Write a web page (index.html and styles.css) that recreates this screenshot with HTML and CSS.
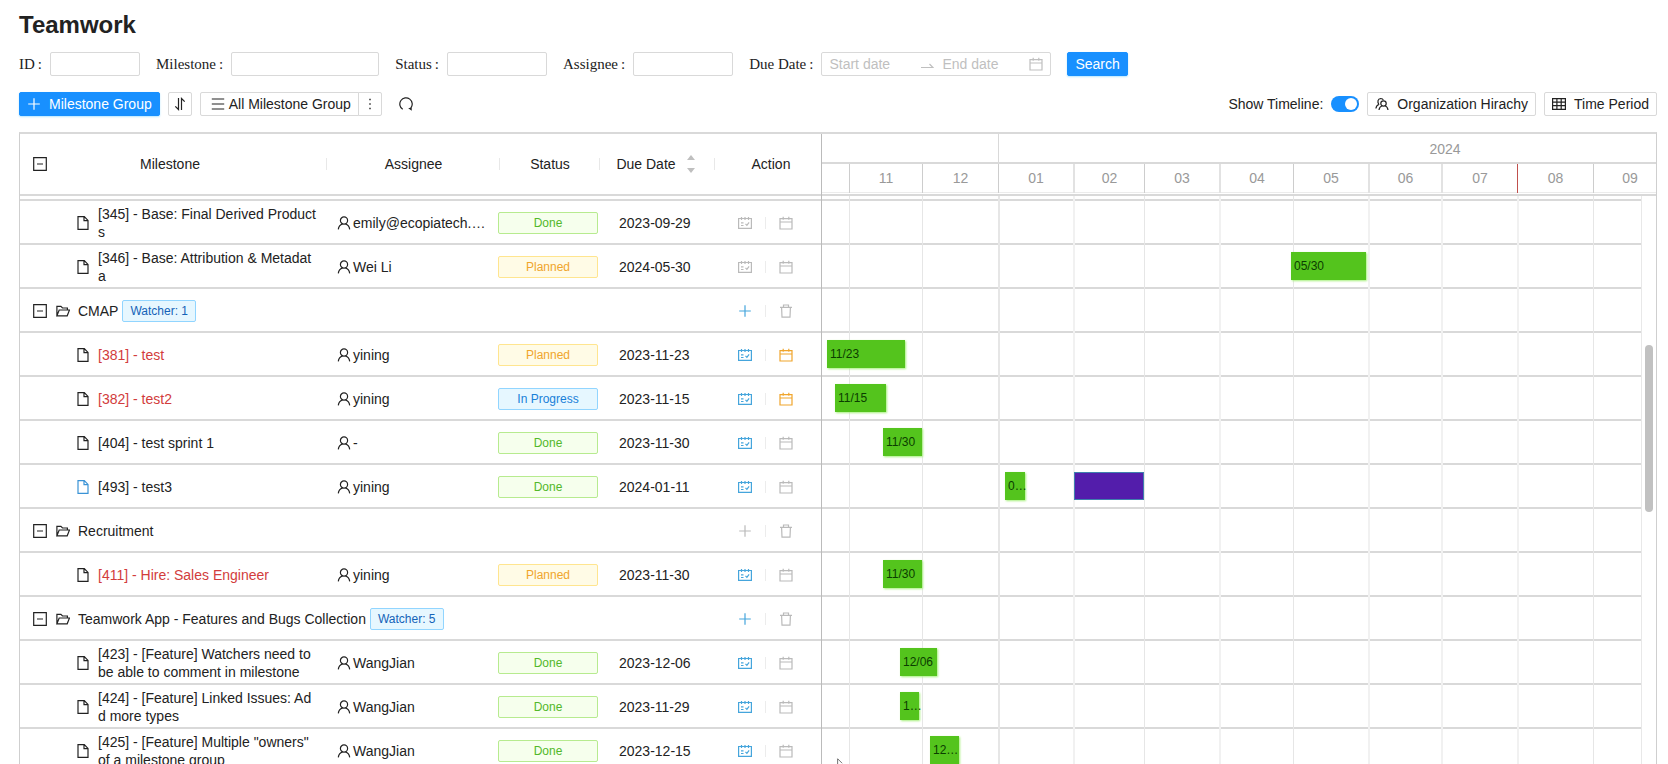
FILE: index.html
```html
<!DOCTYPE html>
<html lang="en">
<head>
<meta charset="utf-8">
<title>Teamwork</title>
<link rel="stylesheet" href="styles.css">
</head>
<body>
<svg class="sprite" aria-hidden="true">
  <symbol id="i-minus" viewBox="0 0 14 14"><path d="M.7.7h12.6v12.6H.7zM4 7h6"/></symbol>
  <symbol id="i-file" viewBox="0 0 14 14"><path d="M2 .7h6.3L12 4.4v8.900H2zM8 .9v3.800h3.800"/></symbol>
  <symbol id="i-folder" viewBox="0 0 14 14"><path d="M.9 11.800V2.400h4l1.600 1.600h4.900v2M.9 11.800 3.200 6h10.300l-2.300 5.800z"/></symbol>
  <symbol id="i-user" viewBox="0 0 14 14"><circle cx="7" cy="4.500" r="3.600"/><path d="M1.300 13.400C1.600 10.600 3.600 8.600 5.600 7.900M12.700 13.400C12.400 10.600 10.400 8.600 8.400 7.900"/></symbol>
  <symbol id="i-team" viewBox="0 0 14 14"><circle cx="8.500" cy="6.500" r="2.700"/><path d="M4 13c.3-2.200 1.500-3.600 3.200-4.200M13 13c-.3-2.200-1.300-3.600-3-4.200M3.800 6.900C2.300 5.500 2.600 1.600 5.700 1.500 7 1.500 8 2.200 8.300 3.200M.9 11.500C1.100 9.400 2.200 8 4.200 7.200"/></symbol>
  <symbol id="i-plan" viewBox="0 0 14 14"><path d="M.6 2.500h12.800v9.900H.6zM3.500 1v3M7 1v3M10.500 1v3M3 6.800h2.500M3 9.500h2.500M7.500 7.800l1.400 1.500 2.200-3"/></symbol>
  <symbol id="i-cal" viewBox="0 0 14 14"><path d="M1 2.600h12v10.400H1zM1 6h12M4.200.8v3M9.800.8v3"/></symbol>
  <symbol id="i-plus" viewBox="0 0 14 14"><path d="M7 1.200v11.600M1.200 7h11.600"/></symbol>
  <symbol id="i-trash" viewBox="0 0 14 14"><path d="M1 3.300h12M4.500 3V1h5v2M2.600 3.500l.4 9.700h8l.4-9.700"/></symbol>
  <symbol id="i-sort" viewBox="0 0 14 14"><path d="M5.500 1v11.500L2.300 9.300M8.500 13V1.500l3.200 3.200"/></symbol>
  <symbol id="i-menu" viewBox="0 0 14 14"><path d="M.8 2h12.400M.8 7h12.400M.8 12h12.400"/></symbol>
  <symbol id="i-more" viewBox="0 0 14 14"><path d="M6.300 1.800h1.400v1.400H6.300zM6.300 6.300h1.400v1.400H6.300zM6.300 10.800h1.400v1.400H6.300z" fill="currentColor" stroke="none"/></symbol>
  <symbol id="i-reload" viewBox="0 0 14 14"><path d="M3.700 12.300A6.200 6.200 0 1 1 11.800 11"/><path d="M9.200 11.200l3.400-.8.2 3.300z" fill="currentColor" stroke="none"/></symbol>
  <symbol id="i-table" viewBox="0 0 14 14"><path d="M.6 1.700h12.800v10.600H.6zM.6 5.200h12.800M.6 8.700h12.800M4.900 1.700v10.600M9.200 1.700v10.600"/></symbol>
  <symbol id="i-swap" viewBox="0 0 14 14"><path d="M1 10.500h12L9.500 7"/></symbol>
</svg>

<main class="page">
  <h1 class="title">Teamwork</h1>

  <form class="filters">
    <div class="field"><label for="f-id">ID<span class="colon">:</span></label><input id="f-id" class="input input-id" type="text"></div>
    <div class="field"><label for="f-ms">Milestone<span class="colon">:</span></label><input id="f-ms" class="input input-ms" type="text"></div>
    <div class="field"><label for="f-st">Status<span class="colon">:</span></label><input id="f-st" class="input" type="text"></div>
    <div class="field"><label for="f-as">Assignee<span class="colon">:</span></label><input id="f-as" class="input" type="text"></div>
    <div class="field"><label for="f-due">Due Date<span class="colon">:</span></label>
      <div class="range">
        <input id="f-due" type="text" placeholder="Start date">
        <svg class="icon"><use href="#i-swap"/></svg>
        <input type="text" placeholder="End date" aria-label="End date">
        <svg class="icon"><use href="#i-cal"/></svg>
      </div>
    </div>
    <button class="btn primary" type="button">Search</button>
  </form>

  <div class="toolbar">
    <button class="btn primary with-icon" type="button"><svg class="icon"><use href="#i-plus"/></svg>Milestone Group</button>
    <button class="btn square" type="button" aria-label="Sort"><svg class="icon"><use href="#i-sort"/></svg></button>
    <div class="combo">
      <button class="btn all" type="button"><svg class="icon"><use href="#i-menu"/></svg>All Milestone Group</button>
      <button class="btn more" type="button" aria-label="More"><svg class="icon"><use href="#i-more"/></svg></button>
    </div>
    <button class="plain reload" type="button" aria-label="Reload"><svg class="icon"><use href="#i-reload"/></svg></button>
    <div class="toolbar-right">
      <label class="show" for="show-tl">Show Timeline:</label>
      <input id="show-tl" class="switch" type="checkbox" role="switch" checked>
      <button class="btn with-icon" type="button"><svg class="icon"><use href="#i-team"/></svg>Organization Hirachy</button>
      <button class="btn with-icon" type="button"><svg class="icon"><use href="#i-table"/></svg>Time Period</button>
    </div>
  </div>

  <section class="gantt">
    <table class="list">
      <colgroup><col class="c-ms"><col class="c-as"><col class="c-st"><col class="c-due"><col class="c-act"></colgroup>
      <thead>
        <tr>
          <th><div class="head-ms"><button class="plain" type="button" aria-label="Collapse all"><svg class="icon"><use href="#i-minus"/></svg></button><span>Milestone</span></div></th>
          <th>Assignee</th><th>Status</th>
          <th><div class="head-due">Due Date<span class="sorter"><i class="up"></i><i class="down"></i></span></div></th>
          <th class="head-act">Action</th>
        </tr>
      </thead>
      <tbody>
        <tr class="peek"><td colspan="5"></td></tr>
        <tr><td><div class="item"><svg class="icon"><use href="#i-file"/></svg><span class="name">[345] - Base: Final Derived Products</span></div></td><td><div class="person"><svg class="icon"><use href="#i-user"/></svg>emily@ecopiatech.…</div></td><td><span class="tag done">Done</span></td><td class="date">2023-09-29</td><td><div class="acts"><button class="plain" type="button" aria-label="Plan"><svg class="icon"><use href="#i-plan"/></svg></button><button class="plain" type="button" aria-label="Schedule"><svg class="icon"><use href="#i-cal"/></svg></button></div></td></tr>
        <tr><td><div class="item"><svg class="icon"><use href="#i-file"/></svg><span class="name">[346] - Base: Attribution &amp; Metadata</span></div></td><td><div class="person"><svg class="icon"><use href="#i-user"/></svg>Wei Li</div></td><td><span class="tag planned">Planned</span></td><td class="date">2024-05-30</td><td><div class="acts"><button class="plain" type="button" aria-label="Plan"><svg class="icon"><use href="#i-plan"/></svg></button><button class="plain" type="button" aria-label="Schedule"><svg class="icon"><use href="#i-cal"/></svg></button></div></td></tr>
        <tr><td colspan="4"><div class="group"><button class="plain" type="button" aria-label="Collapse"><svg class="icon"><use href="#i-minus"/></svg></button><svg class="icon"><use href="#i-folder"/></svg><span>CMAP</span><span class="watch">Watcher: 1</span></div></td><td><div class="acts"><button class="plain blue" type="button" aria-label="Add"><svg class="icon"><use href="#i-plus"/></svg></button><button class="plain" type="button" aria-label="Delete"><svg class="icon"><use href="#i-trash"/></svg></button></div></td></tr>
        <tr><td><div class="item late"><svg class="icon"><use href="#i-file"/></svg><span class="name">[381] - test</span></div></td><td><div class="person"><svg class="icon"><use href="#i-user"/></svg>yining</div></td><td><span class="tag planned">Planned</span></td><td class="date">2023-11-23</td><td><div class="acts"><button class="plain blue" type="button" aria-label="Plan"><svg class="icon"><use href="#i-plan"/></svg></button><button class="plain orange" type="button" aria-label="Schedule"><svg class="icon"><use href="#i-cal"/></svg></button></div></td></tr>
        <tr><td><div class="item late"><svg class="icon"><use href="#i-file"/></svg><span class="name">[382] - test2</span></div></td><td><div class="person"><svg class="icon"><use href="#i-user"/></svg>yining</div></td><td><span class="tag progress">In Progress</span></td><td class="date">2023-11-15</td><td><div class="acts"><button class="plain blue" type="button" aria-label="Plan"><svg class="icon"><use href="#i-plan"/></svg></button><button class="plain orange" type="button" aria-label="Schedule"><svg class="icon"><use href="#i-cal"/></svg></button></div></td></tr>
        <tr><td><div class="item"><svg class="icon"><use href="#i-file"/></svg><span class="name">[404] - test sprint 1</span></div></td><td><div class="person"><svg class="icon"><use href="#i-user"/></svg>-</div></td><td><span class="tag done">Done</span></td><td class="date">2023-11-30</td><td><div class="acts"><button class="plain blue" type="button" aria-label="Plan"><svg class="icon"><use href="#i-plan"/></svg></button><button class="plain" type="button" aria-label="Schedule"><svg class="icon"><use href="#i-cal"/></svg></button></div></td></tr>
        <tr><td><div class="item"><svg class="icon linked"><use href="#i-file"/></svg><span class="name">[493] - test3</span></div></td><td><div class="person"><svg class="icon"><use href="#i-user"/></svg>yining</div></td><td><span class="tag done">Done</span></td><td class="date">2024-01-11</td><td><div class="acts"><button class="plain blue" type="button" aria-label="Plan"><svg class="icon"><use href="#i-plan"/></svg></button><button class="plain" type="button" aria-label="Schedule"><svg class="icon"><use href="#i-cal"/></svg></button></div></td></tr>
        <tr><td colspan="4"><div class="group"><button class="plain" type="button" aria-label="Collapse"><svg class="icon"><use href="#i-minus"/></svg></button><svg class="icon"><use href="#i-folder"/></svg><span>Recruitment</span></div></td><td><div class="acts"><button class="plain" type="button" aria-label="Add"><svg class="icon"><use href="#i-plus"/></svg></button><button class="plain" type="button" aria-label="Delete"><svg class="icon"><use href="#i-trash"/></svg></button></div></td></tr>
        <tr><td><div class="item late"><svg class="icon"><use href="#i-file"/></svg><span class="name">[411] - Hire: Sales Engineer</span></div></td><td><div class="person"><svg class="icon"><use href="#i-user"/></svg>yining</div></td><td><span class="tag planned">Planned</span></td><td class="date">2023-11-30</td><td><div class="acts"><button class="plain blue" type="button" aria-label="Plan"><svg class="icon"><use href="#i-plan"/></svg></button><button class="plain" type="button" aria-label="Schedule"><svg class="icon"><use href="#i-cal"/></svg></button></div></td></tr>
        <tr><td colspan="4"><div class="group"><button class="plain" type="button" aria-label="Collapse"><svg class="icon"><use href="#i-minus"/></svg></button><svg class="icon"><use href="#i-folder"/></svg><span>Teamwork App - Features and Bugs Collection</span><span class="watch">Watcher: 5</span></div></td><td><div class="acts"><button class="plain blue" type="button" aria-label="Add"><svg class="icon"><use href="#i-plus"/></svg></button><button class="plain" type="button" aria-label="Delete"><svg class="icon"><use href="#i-trash"/></svg></button></div></td></tr>
        <tr><td><div class="item"><svg class="icon"><use href="#i-file"/></svg><span class="name">[423] - [Feature] Watchers need to be able to comment in milestone</span></div></td><td><div class="person"><svg class="icon"><use href="#i-user"/></svg>WangJian</div></td><td><span class="tag done">Done</span></td><td class="date">2023-12-06</td><td><div class="acts"><button class="plain blue" type="button" aria-label="Plan"><svg class="icon"><use href="#i-plan"/></svg></button><button class="plain" type="button" aria-label="Schedule"><svg class="icon"><use href="#i-cal"/></svg></button></div></td></tr>
        <tr><td><div class="item"><svg class="icon"><use href="#i-file"/></svg><span class="name">[424] - [Feature] Linked Issues: Add more types</span></div></td><td><div class="person"><svg class="icon"><use href="#i-user"/></svg>WangJian</div></td><td><span class="tag done">Done</span></td><td class="date">2023-11-29</td><td><div class="acts"><button class="plain blue" type="button" aria-label="Plan"><svg class="icon"><use href="#i-plan"/></svg></button><button class="plain" type="button" aria-label="Schedule"><svg class="icon"><use href="#i-cal"/></svg></button></div></td></tr>
        <tr><td><div class="item"><svg class="icon"><use href="#i-file"/></svg><span class="name">[425] - [Feature] Multiple "owners" of a milestone group</span></div></td><td><div class="person"><svg class="icon"><use href="#i-user"/></svg>WangJian</div></td><td><span class="tag done">Done</span></td><td class="date">2023-12-15</td><td><div class="acts"><button class="plain blue" type="button" aria-label="Plan"><svg class="icon"><use href="#i-plan"/></svg></button><button class="plain" type="button" aria-label="Schedule"><svg class="icon"><use href="#i-cal"/></svg></button></div></td></tr>
      </tbody>
    </table>

    <div class="timeline">
      <div class="scale">
        <div class="years"><div></div><div>2024</div></div>
        <div class="months"><div></div><div>11</div><div>12</div><div>01</div><div class="soft">02</div><div>03</div><div class="soft">04</div><div>05</div><div class="soft">06</div><div class="soft">07</div><div class="now">08</div><div>09</div></div>
      </div>
      <div class="chart">
        <div class="rows">
          <div class="row peek"></div>
          <div class="row"></div>
          <div class="row"><div class="bar" style="left:469px;width:75px">05/30</div></div>
          <div class="row"></div>
          <div class="row"><div class="bar" style="left:5px;width:78px">11/23</div></div>
          <div class="row"><div class="bar" style="left:13px;width:51px">11/15</div></div>
          <div class="row"><div class="bar" style="left:61px;width:39px">11/30</div></div>
          <div class="row"><div class="bar" style="left:183px;width:20px">0…</div><div class="bar sprint" style="left:252px;width:70px"></div></div>
          <div class="row"></div>
          <div class="row"><div class="bar" style="left:61px;width:39px">11/30</div></div>
          <div class="row"></div>
          <div class="row"><div class="bar" style="left:78px;width:37px">12/06</div></div>
          <div class="row"><div class="bar" style="left:78px;width:19px">1…</div></div>
          <div class="row"><div class="bar" style="left:108px;width:29px">12…</div></div>
        </div>
        <div class="months guides"><div></div><div></div><div></div><div class="soft wide"></div><div class="soft"></div><div></div><div class="soft"></div><div></div><div class="soft"></div><div class="soft"></div><div class="soft"></div><div></div></div>
      </div>
      <div class="thumb"></div>
      <svg class="pointer" viewBox="0 0 7 8"><path d="M1 9V1l6 6" /></svg>
    </div>
  </section>
</main>
</body>
</html>
```
FILE: styles.css
```css
* { box-sizing: border-box; }

body {
  margin: 0;
  background: #fff;
  color: #222;
  font: 14px/18px "Liberation Sans", Arial, sans-serif;
}

button, input { font: inherit; color: inherit; }

.sprite { display: none; }

.icon {
  display: block;
  flex: none;
  width: 14px;
  height: 14px;
  fill: none;
  stroke: currentColor;
  stroke-width: 1.2;
}

.page {
  display: flex;
  flex-direction: column;
  height: 100vh;
  padding: 9px 11px 0 19px;
  overflow: hidden;
}

.title {
  margin: 0 0 11px;
  font-size: 24px;
  line-height: 32px;
}

/* filters */
.filters {
  display: flex;
  align-items: center;
  gap: 16px;
  margin-bottom: 16px;
}

.field { display: flex; align-items: center; }

.field label {
  margin-right: 8px;
  font-family: "Liberation Serif", serif;
  font-size: 15px;
}

.colon { margin-left: 3px; }

.input {
  width: 100px;
  height: 24px;
  border: 1px solid #d9d9d9;
  border-radius: 2px;
  background: #fff;
}

.input-id { width: 90px; }
.input-ms { width: 148px; }

.range {
  display: flex;
  align-items: center;
  width: 230px;
  height: 24px;
  padding: 0 7px;
  border: 1px solid #d9d9d9;
  border-radius: 2px;
  color: #bfbfbf;
}

.range input {
  flex: 1;
  min-width: 0;
  padding: 0;
  border: 0;
  background: none;
  outline: 0;
}

.range input::placeholder { color: #bfbfbf; }
.range input + .icon { margin: 0 8px 0 4px; }
.range .icon:last-child { margin: 0; }

.btn {
  display: flex;
  align-items: center;
  justify-content: center;
  height: 24px;
  padding: 0 7px;
  border: 1px solid #d9d9d9;
  border-radius: 2px;
  background: #fff;
  white-space: nowrap;
}

.btn.primary {
  border-color: #1890ff;
  background: #1890ff;
  color: #fff;
  box-shadow: 0 1px 2px #b5e6ff;
}

.btn.with-icon { gap: 8px; }
.btn.square { width: 24px; padding: 0; }

.plain {
  display: block;
  padding: 0;
  border: 0;
  background: none;
}

/* toolbar */
.toolbar {
  display: flex;
  align-items: center;
  gap: 8px;
  margin-bottom: 16px;
}

.combo { display: flex; }
.all { gap: 4px; padding: 0 7px 0 10px; border-radius: 2px 0 0 2px; }
.more { width: 24px; margin-left: -1px; padding: 0; border-radius: 0 2px 2px 0; }
.reload { margin-left: 9px; }

.toolbar-right {
  display: flex;
  align-items: center;
  gap: 8px;
  margin-left: auto;
}

.switch {
  appearance: none;
  display: flex;
  justify-content: flex-end;
  width: 28px;
  height: 16px;
  margin: 0;
  padding: 2px;
  border-radius: 8px;
  background: #1890ff;
}

.switch::before {
  content: "";
  width: 12px;
  height: 12px;
  border-radius: 6px;
  background: #fff;
}

/* gantt panel */
.gantt {
  display: flex;
  flex: 1;
  min-height: 0;
  border: 1px solid #cfcfcf;
  border-top: 2px solid #d9d9d9;
  border-bottom: 0;
  overflow: hidden;
}

.list {
  flex: none;
  width: 801px;
  height: 0;
  border-spacing: 0;
  table-layout: fixed;
}

.c-ms { width: 307px; }
.c-as { width: 173px; }
.c-st { width: 100px; }
.c-due { width: 115px; }
.c-act { width: 106px; }

th {
  height: 62px;
  padding: 0;
  border-bottom: 2px solid #d9d9d9;
  font-weight: 400;
  background: linear-gradient(#e8e8e8, #e8e8e8) right center / 1px 12px no-repeat;
}

.head-act { padding-left: 6px; background: none; }

.head-ms { display: flex; align-items: center; padding: 0 34px 0 13px; }
.head-ms span { flex: 1; }
.head-due { display: flex; align-items: center; justify-content: center; gap: 11px; padding-right: 4px; }

.sorter { display: grid; gap: 8px; }
.up, .down { border: 4px solid transparent; }
.up { border-top: 0; border-bottom: 5px solid #bfbfbf; }
.down { border-bottom: 0; border-top: 5px solid #bfbfbf; }

td {
  height: 44px;
  padding: 1px 0 0;
  border-bottom: 2px solid #d9d9d9;
}

.peek td { height: 5px; padding: 0; }

.item { display: flex; align-items: center; gap: 8px; padding-left: 56px; }
.name { width: 219px; word-break: break-all; }
.late .name { color: #d23c3c; }
.linked { color: #3a93d6; }

.person { display: flex; align-items: center; gap: 2px; padding-left: 10px; white-space: nowrap; }

.group { display: flex; align-items: center; padding-left: 13px; }
.group .plain { margin-right: 9px; }
.group > .icon { margin-right: 8px; }

.watch, .tag {
  border: 1px solid #91d5ff;
  border-radius: 2px;
  background: #e6f7ff;
  font-size: 12px;
  line-height: 20px;
}

.watch { margin-left: 4px; padding: 0 7px; color: #1463b8; }

.tag {
  display: block;
  width: 100px;
  margin-left: -2px;
  text-align: center;
}

.done { border-color: #b7eb8f; background: #f6ffed; color: #52b82a; }
.planned { border-color: #ffe58f; background: #fffbe6; color: #f0a52c; }
.progress { color: #1880d8; }

.date { padding-left: 19px; }

.acts { display: flex; align-items: center; padding-left: 23px; }
.acts .plain { color: #bababa; }
.acts .plain.blue { color: #45a5dc; }
.acts .plain.orange { color: #f0a52c; }

.acts .plain + .plain {
  margin-left: 13px;
  padding-left: 14px;
  background: linear-gradient(#ececec, #ececec) left center / 1px 12px no-repeat;
}

/* timeline */
.timeline {
  position: relative;
  flex: 1;
  min-width: 0;
  border-left: 1px solid #bbb;
  overflow: hidden;
}

.scale {
  height: 62px;
  border-bottom: 2px solid #d9d9d9;
  color: #999;
  text-align: center;
}

.years {
  display: grid;
  grid-template-columns: 176px 893px;
  height: 30px;
  border-bottom: 2px solid #d9d9d9;
  line-height: 30px;
}

.years div + div { border-left: 1px solid #d9d9d9; }

.months {
  display: grid;
  grid-template-columns: 27px 73px 76px 75px 71px 75px 74px 75px 73px 76px 76px 73px;
}

.scale .months { height: 29px; border-bottom: 1px solid #ececec; line-height: 29px; }
.scale .months div { border-left: 1px solid #cdcdcd; }
.scale .months .soft { border-left: 2px solid #e2e2e2; }
.scale .months .now { border-left: 1px solid #c0504d; }
.scale .months div:first-child { border: 0; }

.chart { position: relative; margin-right: 14px; border-right: 1px solid #e8e8e8; }

.guides { position: absolute; inset: 0; overflow: hidden; pointer-events: none; }
.guides div { border-left: 1px solid #e6e6e6; }
.guides .soft { border-left: 2px solid #f1f1f1; }
.guides .wide { border-left-color: #e6e6e6; }
.guides div:first-child { border: 0; }

.row { position: relative; height: 44px; border-bottom: 2px solid #d9d9d9; }
.row.peek { height: 5px; }

.bar {
  position: absolute;
  z-index: 1;
  top: 7px;
  height: 28px;
  padding-left: 3px;
  background: #54c41d;
  box-shadow: 1px 1px 2px #a5f07a;
  color: #0b3d00;
  font-size: 12px;
  line-height: 28px;
  white-space: nowrap;
}

.sprint { border: 1px solid #3f7fae; background: #531dab; box-shadow: none; }

.thumb {
  position: absolute;
  top: 211px;
  right: 3px;
  width: 8px;
  height: 167px;
  border-radius: 4px;
  background: #c1c1c1;
}

.pointer {
  position: absolute;
  left: 14px;
  bottom: 0;
  width: 7px;
  height: 6px;
  fill: #fff;
  stroke: #444;
}
```
